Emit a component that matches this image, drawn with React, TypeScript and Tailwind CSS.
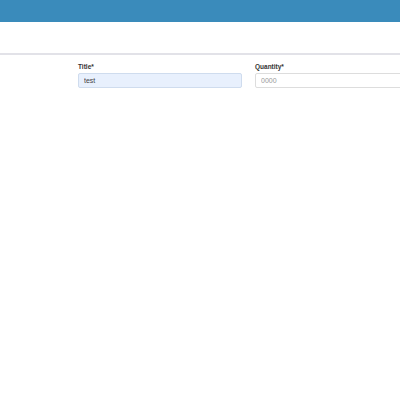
export default function App() {
  return (
    <div className="min-h-[400px] w-[400px] overflow-hidden bg-white font-['Liberation_Sans',Arial,sans-serif]">
      {/* Top bar */}
      <div className="h-[22px] bg-[#3a8bbb]" />
      <div className="h-[33px] border-b-2 border-[#e2e2e8] bg-white" />

      {/* Form row */}
      <div className="flex gap-[13px] pl-[78px] pt-[7px]">
        <div className="w-[164px] shrink-0">
          <label className="block text-[6.5px] font-bold leading-[9px] text-[#333]">Title*</label>
          <input
            className="mt-[2px] block h-[15px] w-full rounded-[2px] border border-[#cfdcee] bg-[#e8f0fd] px-[5px] text-[7px] text-[#444] outline-none"
            defaultValue="test"
            readOnly
          />
        </div>
        <div className="w-[164px] shrink-0">
          <label className="block text-[6.5px] font-bold leading-[9px] text-[#333]">Quantity*</label>
          <input
            className="mt-[2px] block h-[15px] w-full rounded-[2px] border border-[#ddd] bg-white px-[5px] text-[7px] text-[#444] outline-none placeholder:text-[#999]"
            placeholder="0000"
            readOnly
          />
        </div>
      </div>
    </div>
  );
}
